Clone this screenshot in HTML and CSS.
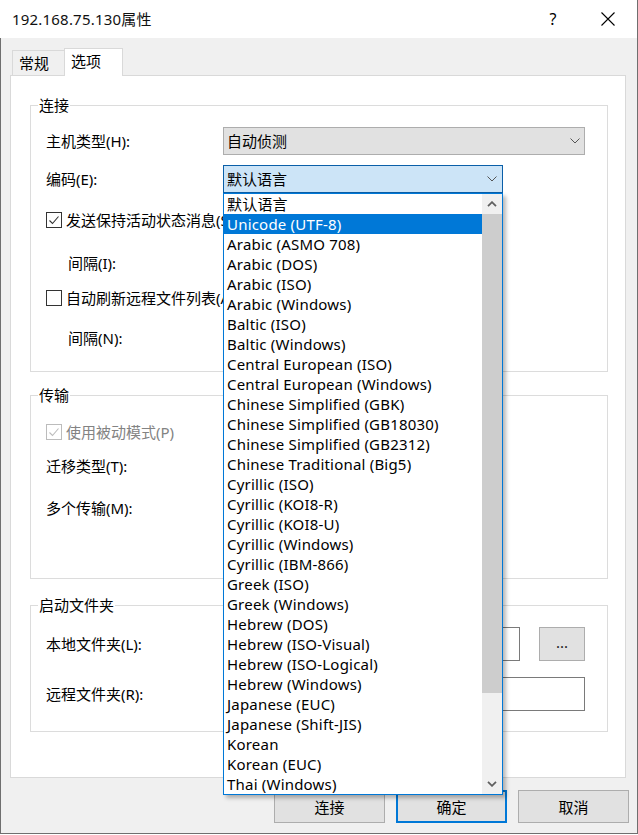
FILE: index.html
```html
<!DOCTYPE html>
<html lang="zh-CN">
<head>
<meta charset="utf-8">
<title>192.168.75.130属性</title>
<link rel="stylesheet" href="styles.css">
</head>
<body>
<div class="window">
  <div class="titlebar">
    <span class="title">192.168.75.130属性</span>
    <span class="help">?</span>
    <span class="close"><svg width="14" height="14" viewBox="0 0 14 14"><path d="M0.5 0.5L13.5 13.5M13.5 0.5L0.5 13.5" stroke="#000" stroke-width="1.1" fill="none"/></svg></span>
  </div>
  <div class="client">
    <div class="tabs">
      <div class="tab">常规</div>
      <div class="tab active">选项</div>
    </div>
    <div class="panel">
      <fieldset class="group g1">
        <legend>连接</legend>
        <div class="row r1">
          <span class="lbl">主机类型(H):</span>
          <div class="combo wide"><span>自动侦测</span><svg class="chev" width="10" height="6" viewBox="0 0 10 6"><path d="M0.5 0.5L5 5L9.5 0.5" stroke="#555" stroke-width="1" fill="none"/></svg></div>
        </div>
        <div class="row r2">
          <span class="lbl">编码(E):</span>
          <div class="combo focus"><span>默认语言</span><svg class="chev" width="10" height="6" viewBox="0 0 10 6"><path d="M0.5 0.5L5 5L9.5 0.5" stroke="#555" stroke-width="1" fill="none"/></svg>
            <div class="dropdown">
              <ul class="items">
                <li>默认语言</li>
                <li class="sel">Unicode (UTF-8)</li>
                <li>Arabic (ASMO 708)</li>
                <li>Arabic (DOS)</li>
                <li>Arabic (ISO)</li>
                <li>Arabic (Windows)</li>
                <li>Baltic (ISO)</li>
                <li>Baltic (Windows)</li>
                <li>Central European (ISO)</li>
                <li>Central European (Windows)</li>
                <li>Chinese Simplified (GBK)</li>
                <li>Chinese Simplified (GB18030)</li>
                <li>Chinese Simplified (GB2312)</li>
                <li>Chinese Traditional (Big5)</li>
                <li>Cyrillic (ISO)</li>
                <li>Cyrillic (KOI8-R)</li>
                <li>Cyrillic (KOI8-U)</li>
                <li>Cyrillic (Windows)</li>
                <li>Cyrillic (IBM-866)</li>
                <li>Greek (ISO)</li>
                <li>Greek (Windows)</li>
                <li>Hebrew (DOS)</li>
                <li>Hebrew (ISO-Visual)</li>
                <li>Hebrew (ISO-Logical)</li>
                <li>Hebrew (Windows)</li>
                <li>Japanese (EUC)</li>
                <li>Japanese (Shift-JIS)</li>
                <li>Korean</li>
                <li>Korean (EUC)</li>
                <li>Thai (Windows)</li>
              </ul>
              <div class="scrollbar">
                <div class="sb-btn"><svg width="10" height="6" viewBox="0 0 10 6"><path d="M1 5.2L5 1.2L9 5.2" stroke="#606060" stroke-width="1.8" fill="none"/></svg></div>
                <div class="sb-thumb"></div>
                <div class="sb-track"></div>
                <div class="sb-btn"><svg width="10" height="6" viewBox="0 0 10 6"><path d="M1 0.8L5 4.8L9 0.8" stroke="#606060" stroke-width="1.8" fill="none"/></svg></div>
              </div>
            </div>
          </div>
        </div>
        <div class="row r3">
          <span class="check"><svg width="14" height="14" viewBox="0 0 14 14"><path d="M2.5 7.5L5.5 10.5L11.5 3.5" stroke="#333" stroke-width="1.1" fill="none"/></svg></span>
          <span class="cbtext">发送保持活动状态消息(S)</span>
        </div>
        <div class="row r4">
          <span class="lbl indent">间隔(I):</span>
        </div>
        <div class="row r5">
          <span class="check"></span>
          <span class="cbtext">自动刷新远程文件列表(A)</span>
        </div>
        <div class="row r6">
          <span class="lbl indent">间隔(N):</span>
        </div>
      </fieldset>

      <fieldset class="group g2">
        <legend>传输</legend>
        <div class="row t1 disabled">
          <span class="check"><svg width="14" height="14" viewBox="0 0 14 14"><path d="M2.5 7.5L5.5 10.5L11.5 3.5" stroke="#bcbcbc" stroke-width="1.1" fill="none"/></svg></span>
          <span class="cbtext">使用被动模式(P)</span>
        </div>
        <div class="row t2">
          <span class="lbl">迁移类型(T):</span>
        </div>
        <div class="row t3">
          <span class="lbl">多个传输(M):</span>
        </div>
      </fieldset>

      <fieldset class="group g3">
        <legend>启动文件夹</legend>
        <div class="row s1">
          <span class="lbl">本地文件夹(L):</span>
          <div class="input short"></div>
          <div class="browse">...</div>
        </div>
        <div class="row s2">
          <span class="lbl">远程文件夹(R):</span>
          <div class="input long"></div>
        </div>
      </fieldset>
    </div>
    <div class="buttons">
      <div class="btn">连接</div>
      <div class="btn default">确定</div>
      <div class="btn">取消</div>
    </div>
  </div>
</div>
</body>
</html>
```

FILE: styles.css
```css
* { box-sizing: border-box; }
html, body { margin: 0; padding: 0; }
body {
  width: 638px;
  height: 835px;
  overflow: hidden;
  background: #fff;
  font-family: "Noto Sans", "Noto Sans CJK SC", sans-serif;
  font-size: 15px;
  color: #000;
}
.window {
  width: 638px;
  height: 834px;
  display: flex;
  flex-direction: column;
}
.titlebar {
  height: 38px;
  flex: none;
  background: #fff;
  display: flex;
  align-items: center;
  border-right: 1px solid #6f6f6f;
}
.title {
  flex: 1;
  margin-left: 12px;
  font-size: 15px;
  letter-spacing: 0.2px;
  color: #111;
  line-height: 20px;
}
.help {
  width: 46px;
  text-align: center;
  font-size: 16px;
  line-height: 20px;
  font-family: "Noto Sans", sans-serif;
  margin-right: 9px;
}
.close {
  width: 46px;
  height: 20px;
  display: flex;
  align-items: center;
  justify-content: center;
  margin-right: 6px;
}
.client {
  flex: 1;
  background: #f0f0f0;
  border: 1px solid #6f6f6f;
  border-top: none;
  padding: 10px 8px 0 9px;
}
.tabs {
  display: flex;
  align-items: flex-end;
  height: 27px;
  margin-left: 2px;
}
.tab {
  height: 25px;
  width: 52px;
  border: 1px solid #d9d9d9;
  border-right: none;
  border-bottom: none;
  padding-left: 6px;
  line-height: 24px;
  background: #f0f0f0;
}
.tab.active {
  height: 28px;
  width: 59px;
  border-right: 1px solid #d9d9d9;
  background: #fff;
  margin-bottom: -1px;
  line-height: 25px;
  position: relative;
  z-index: 1;
}
.panel {
  width: 616px;
  height: 703px;
  background: #fff;
  border: 1px solid #d9d9d9;
  padding-left: 19px;
}
.group {
  width: 578px;
  margin: 0;
  padding: 0;
  border: 1px solid #dcdcdc;
  min-width: 0;
}
.group legend {
  margin-left: 7px;
  padding: 0 1px;
  line-height: 20px;
  font-size: 15px;
}
.g1 { margin-top: 19px; padding-bottom: 19px; }
.g2 { margin-top: 13px; padding-bottom: 56px; }
.g3 { margin-top: 16px; padding-bottom: 20px; }

.row {
  display: flex;
  align-items: center;
  padding-left: 15px;
  line-height: 20px;
}
.lbl { width: 177px; flex: none; white-space: nowrap; }
.lbl.indent { padding-left: 22px; }

.r1 { margin-top: 12px; height: 28px; }
.r2 { margin-top: 10px; height: 28px; }
.r3 { margin-top: 17px; height: 20px; }
.r4 { margin-top: 19px; height: 28px; }
.r5 { margin-top: 11px; height: 20px; }
.r6 { margin-top: 16px; height: 28px; }
.t1 { margin-top: 17px; height: 20px; }
.t2 { margin-top: 10px; height: 28px; }
.t3 { margin-top: 14px; height: 28px; }
.s1 { margin-top: 12px; height: 34px; }
.s2 { margin-top: 16px; height: 34px; }

.combo {
  position: relative;
  height: 28px;
  width: 280px;
  border: 1px solid #adadad;
  background: #e1e1e1;
  display: flex;
  align-items: center;
  padding-left: 3px;
  padding-right: 5px;
  white-space: nowrap;
}
.combo.wide { width: 362px; padding-right: 4px; }
.combo.focus {
  background: #cce4f7;
  border-color: #0a5fa8;
}
.chev { margin-left: auto; flex: none; }

.check {
  width: 16px;
  height: 16px;
  border: 1px solid #333;
  background: #fff;
  display: flex;
  align-items: center;
  justify-content: center;
  flex: none;
}
.cbtext { margin-left: 4px; white-space: nowrap; }
.disabled .check { border-color: #bcbcbc; }
.disabled .cbtext { color: #838383; }

.input {
  height: 34px;
  border: 1px solid #7a7a7a;
  background: #fff;
  flex: none;
}
.input.short { width: 297px; }
.input.long { width: 362px; }
.browse {
  margin-left: 19px;
  width: 46px;
  height: 34px;
  border: 1px solid #adadad;
  background: #e1e1e1;
  display: flex;
  align-items: center;
  justify-content: center;
  line-height: 1;
  padding-bottom: 4px;
  color: #222;
}

.dropdown {
  position: absolute;
  top: 27px;
  left: -1px;
  width: 280px;
  height: 602px;
  background: #fff;
  border: 1px solid #0078d7;
  box-shadow: 3px 3px 4px rgba(0, 0, 0, 0.28);
  display: flex;
  z-index: 10;
}
.items {
  list-style: none;
  margin: 0;
  padding: 0;
  flex: 1;
}
.items li {
  height: 20px;
  line-height: 20px;
  padding-left: 3px;
  letter-spacing: 0.2px;
  white-space: nowrap;
  overflow: hidden;
}
.items li.sel {
  background: #0078d7;
  color: #fff;
}
.scrollbar {
  width: 20px;
  flex: none;
  display: flex;
  flex-direction: column;
  background: #f0f0f0;
}
.sb-btn {
  height: 20px;
  flex: none;
  display: flex;
  align-items: center;
  justify-content: center;
}
.sb-thumb {
  height: 479px;
  flex: none;
  background: #cdcdcd;
}
.sb-track { flex: 1; }

.buttons {
  display: flex;
  justify-content: flex-end;
  gap: 11px;
  margin-top: 12px;
}
.btn {
  width: 111px;
  height: 33px;
  border: 1px solid #adadad;
  background: #e1e1e1;
  display: flex;
  align-items: center;
  justify-content: center;
}
.btn.default { border: 2px solid #0078d7; }
```
